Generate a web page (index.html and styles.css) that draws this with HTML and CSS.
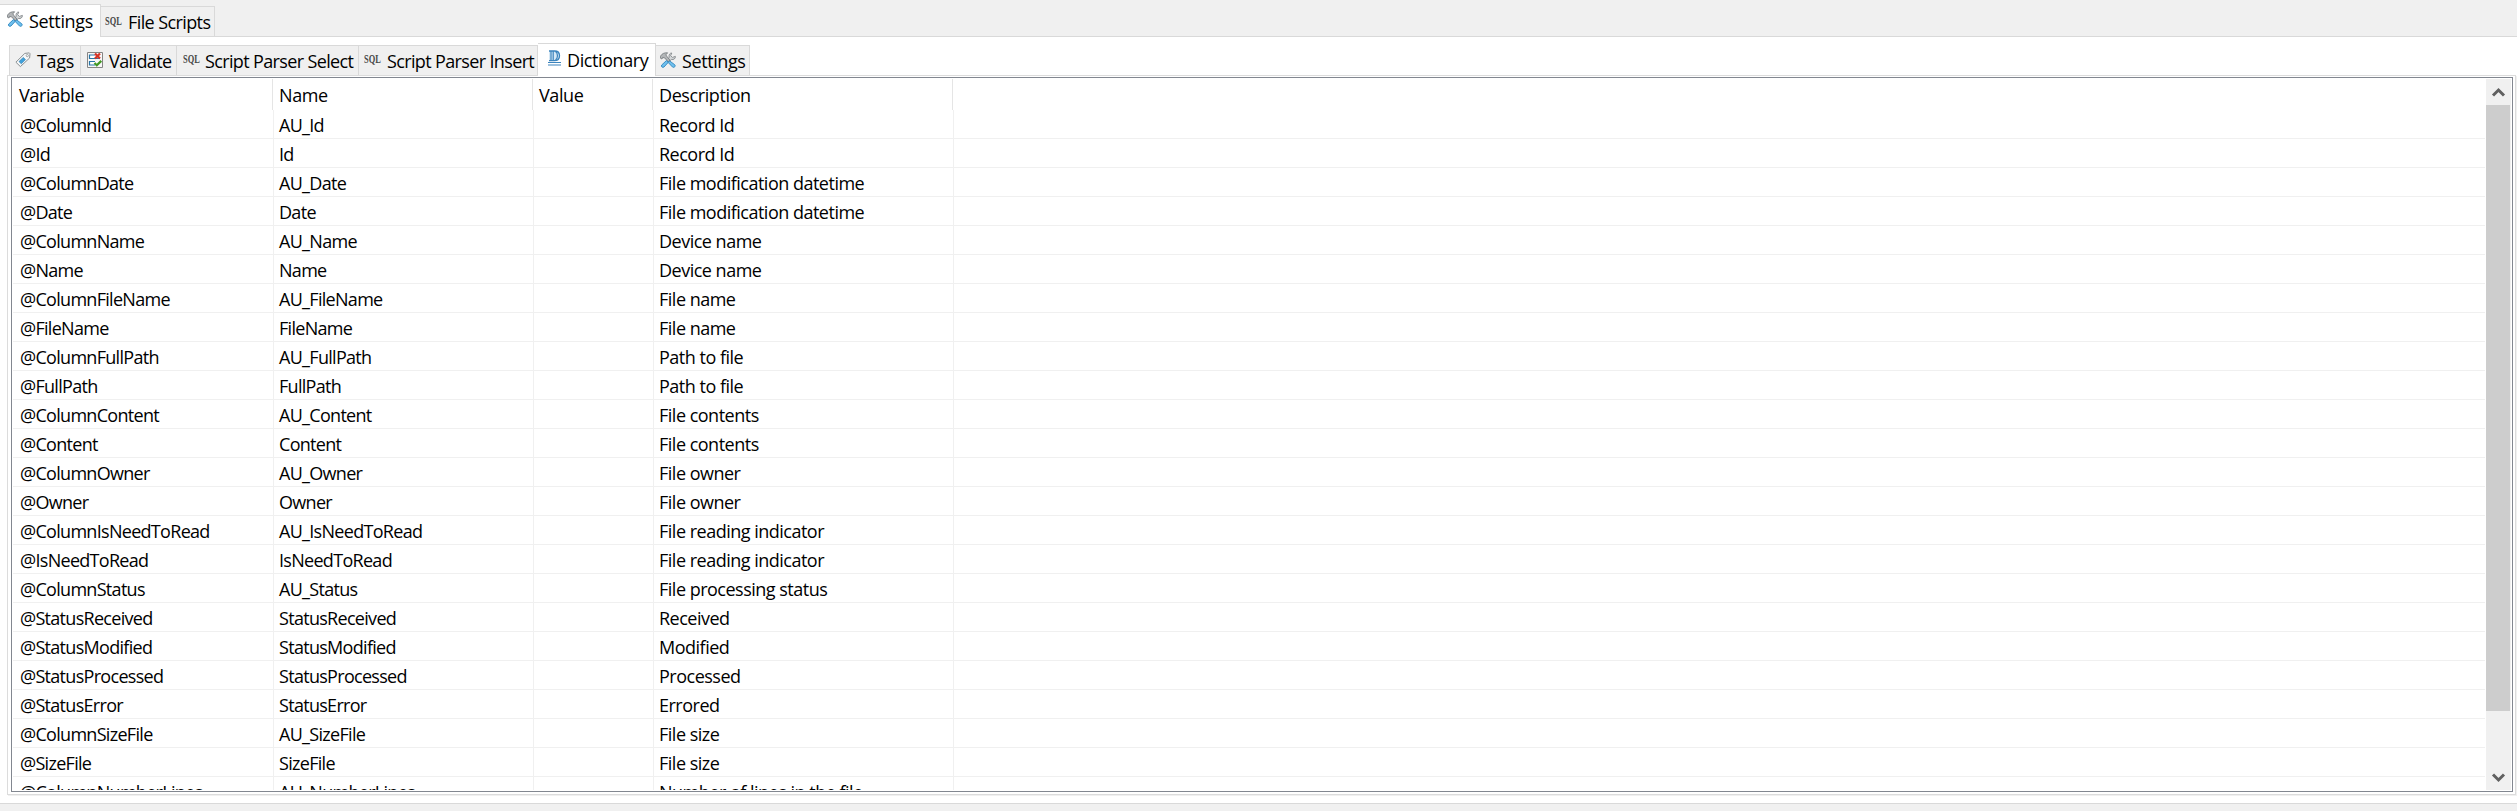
FILE: index.html
```html
<!DOCTYPE html>
<html lang="en">
<head>
<meta charset="utf-8">
<title>Settings</title>
<link rel="stylesheet" href="styles.css">
</head>
<body>
<svg class="defs" width="0" height="0">
  <symbol id="tools" viewBox="0 0 16 16">
    <path d="M11.8 1 10.6 3.7 12.4 5.4 15.4 4.4C15.6 6.6 13.6 8 11.4 7.5L9 9.7 6.9 7.8 9.2 5.3C8.6 2.8 9.8 1 11.8 1Z" fill="#d3d6d8" stroke="#85898c" stroke-width=".9"/>
    <path d="M.5 4.2C2 1.6 4.3.6 7.6.8L5.8 2.9 7.1 4.7 10 8.2 8.2 9.8 4.7 5.9 2.6 5.4 2 7 .3 6.1Z" fill="#b3b6b8" stroke="#7b7f82" stroke-width=".9"/>
    <path d="m6.4 8.6 2 1.6-4.4 4.8C2.6 16 .7 14.7 1.7 13Z" fill="#6fc0ee" stroke="#2f86bd" stroke-width=".9"/>
    <path d="m9.6 8.9 5.1 3.8c1.4 1.4-.5 3.3-2.1 2.4L8.2 10.5Z" fill="#6fc0ee" stroke="#2f86bd" stroke-width=".9"/>
  </symbol>
  <symbol id="tag" viewBox="0 0 16 16">
    <path d="M9.8 1.4 14.3.9 15 1.7 14.6 6 5.4 14.6.9 10.2Z" fill="#f5f7f8" stroke="#8b9093" stroke-width="1"/>
    <circle cx="12.3" cy="3.6" r="1.1" fill="#fff" stroke="#8b9093" stroke-width=".8"/>
    <path d="m8.2 5.4 2.3 2.2-4.2 4.2L4 9.6Z" fill="#3fa1db" stroke="#2977aa" stroke-width=".6"/>
  </symbol>
  <symbol id="validate" viewBox="0 0 16 16">
    <path d="M.5.5h15v15H.5Z" fill="#f8f8f8" stroke="#858585"/>
    <path d="M8 3H2.5v3.5H13M8 9.5H2.5V13H8" fill="#fff" stroke="#2876a8" stroke-width="1.2"/>
    <path d="m8 1.5 5 5m0-5-5 5" stroke="#d63427" stroke-width="2.3"/>
    <path d="m7.5 11 2.3 2.3 4.5-4.4" fill="none" stroke="#429823" stroke-width="2.2"/>
  </symbol>
  <symbol id="dict" viewBox="0 0 16 16">
    <path d="M2 1H7.5c3.5 0 5 2 5 4.7s-1.500 4.900-5 4.900H2" fill="#d5e8f6" stroke="#3c84bd" stroke-width="1.3"/>
    <path d="M4 1v9.600M6.200 1v9.600M8.500 1.500c2.600 1.500 2.600 7.200 0 8.600" fill="none" stroke="#3c84bd" stroke-width="1.200"/>
    <path d="M1 12.500h13M1 15h13" stroke="#3c84bd" stroke-width="1.200"/>
  </symbol>
</svg>
<div class="window">
  <nav class="tabs outer">
    <div class="tab active first"><svg class="icon"><use href="#tools"/></svg><span class="label">Settings</span></div>
    <div class="tab scripts"><span class="sql"><b>SQL</b></span><span class="label">File Scripts</span></div>
  </nav>
  <main class="page">
    <nav class="tabs inner">
      <div class="tab tags"><svg class="icon"><use href="#tag"/></svg><span class="label">Tags</span></div>
      <div class="tab validate"><svg class="icon"><use href="#validate"/></svg><span class="label">Validate</span></div>
      <div class="tab select"><span class="sql"><b>SQL</b></span><span class="label">Script Parser Select</span></div>
      <div class="tab insert"><span class="sql"><b>SQL</b></span><span class="label">Script Parser Insert</span></div>
      <div class="tab active dictionary"><svg class="icon"><use href="#dict"/></svg><span class="label">Dictionary</span></div>
      <div class="tab settings"><svg class="icon"><use href="#tools"/></svg><span class="label">Settings</span></div>
    </nav>
    <section class="panel">
      <div class="list">
        <div class="grid">
          <div class="row head"><span>Variable</span><span>Name</span><span>Value</span><span>Description</span></div>
          <div class="row"><span>@ColumnId</span><span>AU_Id</span><span></span><span>Record Id</span></div>
          <div class="row"><span>@Id</span><span>Id</span><span></span><span>Record Id</span></div>
          <div class="row"><span>@ColumnDate</span><span>AU_Date</span><span></span><span>File modification datetime</span></div>
          <div class="row"><span>@Date</span><span>Date</span><span></span><span>File modification datetime</span></div>
          <div class="row"><span>@ColumnName</span><span>AU_Name</span><span></span><span>Device name</span></div>
          <div class="row"><span>@Name</span><span>Name</span><span></span><span>Device name</span></div>
          <div class="row"><span>@ColumnFileName</span><span>AU_FileName</span><span></span><span>File name</span></div>
          <div class="row"><span>@FileName</span><span>FileName</span><span></span><span>File name</span></div>
          <div class="row"><span>@ColumnFullPath</span><span>AU_FullPath</span><span></span><span>Path to file</span></div>
          <div class="row"><span>@FullPath</span><span>FullPath</span><span></span><span>Path to file</span></div>
          <div class="row"><span>@ColumnContent</span><span>AU_Content</span><span></span><span>File contents</span></div>
          <div class="row"><span>@Content</span><span>Content</span><span></span><span>File contents</span></div>
          <div class="row"><span>@ColumnOwner</span><span>AU_Owner</span><span></span><span>File owner</span></div>
          <div class="row"><span>@Owner</span><span>Owner</span><span></span><span>File owner</span></div>
          <div class="row"><span>@ColumnIsNeedToRead</span><span>AU_IsNeedToRead</span><span></span><span>File reading indicator</span></div>
          <div class="row"><span>@IsNeedToRead</span><span>IsNeedToRead</span><span></span><span>File reading indicator</span></div>
          <div class="row"><span>@ColumnStatus</span><span>AU_Status</span><span></span><span>File processing status</span></div>
          <div class="row"><span>@StatusReceived</span><span>StatusReceived</span><span></span><span>Received</span></div>
          <div class="row"><span>@StatusModified</span><span>StatusModified</span><span></span><span>Modified</span></div>
          <div class="row"><span>@StatusProcessed</span><span>StatusProcessed</span><span></span><span>Processed</span></div>
          <div class="row"><span>@StatusError</span><span>StatusError</span><span></span><span>Errored</span></div>
          <div class="row"><span>@ColumnSizeFile</span><span>AU_SizeFile</span><span></span><span>File size</span></div>
          <div class="row"><span>@SizeFile</span><span>SizeFile</span><span></span><span>File size</span></div>
          <div class="row"><span>@ColumnNumberLines</span><span>AU_NumberLines</span><span></span><span>Number of lines in the file</span></div>
        </div>
        <div class="scrollbar">
          <svg class="arrow" viewBox="0 0 24 26"><path d="M7 16.500 12.500 11 18 16.500" /></svg>
          <div class="thumb"></div>
          <svg class="arrow down" viewBox="0 0 24 26"><path d="M7 10.500 12.500 16 18 10.500" /></svg>
        </div>
      </div>
    </section>
  </main>
</div>
</body>
</html>
```
FILE: styles.css
```css
* { box-sizing: border-box; }
html { overflow: hidden; }
body {
  margin: 0;
  background: #f0f0f0;
  color: #000;
  font: 18px/24px "Open Sans", "Noto Sans", sans-serif;
  letter-spacing: -0.6px;
}
.defs { position: absolute; }
.window { height: 811px; display: flex; flex-direction: column; overflow: hidden; }
.tabs { display: flex; align-items: flex-end; white-space: nowrap; }
.tab {
  display: flex;
  flex: none;
  height: 30px;
  border: 1px solid #d9d9d9;
  border-width: 1px 1px 0 0;
  background: #f0f0f0;
}
.tab.active { background: #fff; }
.icon { flex: none; width: 16px; height: 16px; }
.sql { flex: none; width: 17px; height: 16px; }
.sql b {
  display: block;
  font: bold 13.5px/16px "Liberation Serif", serif;
  letter-spacing: 0;
  color: #484848;
  transform: scaleX(0.62);
  transform-origin: 0 0;
}

.outer { height: 37px; flex: none; box-shadow: inset 0 -1px #d9d9d9; }
.outer .tab.first { width: 101px; height: 33px; padding: 6px 0 0 7px; }
.outer .first .label { margin: -2px 0 0 6px; letter-spacing: -0.35px; }
.outer .scripts { width: 114px; height: 31px; padding: 6px 0 0 4px; border-bottom: 1px solid #d9d9d9; }
.scripts .label { margin: -3px 0 0 6px; }

.page { height: 767px; flex: none; background: #fff; border-bottom: 1px solid #d9d9d9; padding: 6px 1px 0 7px; }
.inner { height: 32px; padding-left: 2px; }
.inner .tab { padding: 6px 0 0 6px; }
.inner .label { margin: -3px 0 0 6px; }
.inner .tags { width: 72px; padding-left: 5px; border-left: 1px solid #d9d9d9; }
.inner .tags .label { letter-spacing: -0.35px; }
.inner .validate { width: 96px; }
.inner .select, .inner .insert { width: 182px; padding-top: 5px; }
.inner .select .label, .inner .insert .label { margin: -2px 0 0 5px; letter-spacing: -0.64px; }
.inner .insert { width: 179px; padding-left: 5px; }
.inner .insert .label { margin-left: 6px; }
.inner .dictionary { width: 118px; height: 33px; margin-bottom: -1px; padding: 6px 0 0 9px; position: relative; z-index: 1; }
.inner .dictionary .label { margin: -2px 0 0 4px; letter-spacing: -0.4px; }
.inner .settings { width: 94px; padding-left: 4px; }
.inner .settings .label { margin-left: 6px; letter-spacing: -0.4px; }

.panel { height: 720px; border: 1px solid #dcdcdc; box-shadow: 1px 1px #f0f0f0; padding: 1px 2px 2px 3px; }
.list { height: 715px; display: flex; border: 1px solid #828790; padding: 1px; background: #fff; }
.grid { flex: 1; height: 711px; overflow: hidden; margin-right: 1px; }
.row {
  display: grid;
  grid-template-columns: 261px 260px 120px 300px;
  height: 29px;
  border-bottom: 1px solid #f0f0f0;
  letter-spacing: -0.7px;
}
.row span { height: 28px; padding: 3px 0 0 5px; border-right: 1px solid #f0f0f0; white-space: nowrap; }
.row span:first-child { padding-left: 7px; }
.row span:last-child { letter-spacing: -0.5px; }
.row.head { grid-template-columns: 260px 260px 120px 300px; height: 31px; border: 0; letter-spacing: -0.4px; }
.head span { height: 31px; padding: 4px 0 0 6px; border-color: #e5e5e5; }
.head span:first-child { padding-left: 6px; }
.head span:last-child { letter-spacing: -0.4px; }
.scrollbar { width: 25px; height: 711px; background: #f0f0f0; display: flex; flex-direction: column; }
.arrow { width: 24px; height: 26px; flex: none; fill: none; stroke: #606060; stroke-width: 3; }
.thumb { width: 24px; height: 606px; background: #cdcdcd; }
.down { margin-top: auto; }
```
